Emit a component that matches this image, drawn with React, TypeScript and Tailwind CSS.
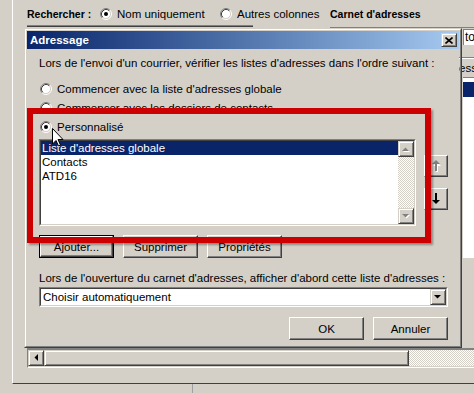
import React from 'react';

const Radio = ({ checked = false }: { checked?: boolean }) => (
  <svg width="12" height="12" viewBox="0 0 12 12" className="shrink-0">
    <circle cx="6" cy="6" r="4.5" fill="#ffffff" />
    <path d="M2.11 9.89A5.5 5.5 0 0 1 9.89 2.11" fill="none" stroke="#808080" />
    <path d="M9.89 2.11A5.5 5.5 0 0 1 2.11 9.89" fill="none" stroke="#ffffff" />
    <path d="M2.82 9.18A4.5 4.5 0 0 1 9.18 2.82" fill="none" stroke="#404040" />
    <path d="M9.18 2.82A4.5 4.5 0 0 1 2.82 9.18" fill="none" stroke="#d4d0c8" />
    {checked && <circle cx="6" cy="6" r="2" fill="#000000" />}
  </svg>
);

// classic raised face used for small scroll / arrow buttons
const raised =
  'bg-[#d4d0c8] border border-t-[#d4d0c8] border-l-[#d4d0c8] border-r-[#404040] border-b-[#404040] shadow-[inset_1px_1px_0_#ffffff,inset_-1px_-1px_0_#808080]';

const Button = ({ label, isDefault = false }: { label: string; isDefault?: boolean }) =>
  isDefault ? (
    <div className="w-[75px] h-[23px] border border-black flex">
      <div className="flex-1 flex items-center justify-center bg-[#d4d0c8] border border-t-white border-l-white border-r-[#404040] border-b-[#404040] shadow-[inset_-1px_-1px_0_#808080]">
        {label}
      </div>
    </div>
  ) : (
    <div className="w-[75px] h-[23px] flex items-center justify-center bg-[#d4d0c8] border border-t-white border-l-white border-r-[#404040] border-b-[#404040] shadow-[inset_-1px_-1px_0_#808080]">
      {label}
    </div>
  );

const Tri = ({ dir, color = '#000000', ghost = false }: { dir: 'up' | 'down' | 'left'; color?: string; ghost?: boolean }) => {
  const pts = { up: '0,4 3.5,0.5 7,4', down: '0,0 7,0 3.5,3.5', left: '4,0 4,7 0.5,3.5' }[dir];
  const w = dir === 'left' ? 4 : 7;
  const h = dir === 'left' ? 7 : 4;
  return (
    <svg width={w + 1} height={h + 1} viewBox={`0 0 ${w + 1} ${h + 1}`}>
      {ghost && <polygon points={pts} fill="#ffffff" transform="translate(1 1)" />}
      <polygon points={pts} fill={color} />
    </svg>
  );
};

const MoveArrow = ({ down = false }: { down?: boolean }) => (
  <svg width="9" height="12" viewBox="0 0 9 12">
    {down ? (
      <polygon points="3,0 5,0 5,7 8,7 4,11 0,7 3,7" fill="#000000" />
    ) : (
      <>
        <polygon points="4,1 8,5 5,5 5,12 3,12 3,5 0,5" fill="#ffffff" transform="translate(1 1)" />
        <polygon points="4,0 8,4 5,4 5,11 3,11 3,4 0,4" fill="#808080" />
      </>
    )}
  </svg>
);

export default function App() {
  return (
    <div className="relative w-[474px] h-[393px] overflow-hidden bg-[#d4d0c8] text-[11.5px] leading-[14px] text-black font-['Liberation_Sans',Arial,sans-serif]">
      {/* address book window behind the dialog */}
      <div className="ml-[12px] h-[384px] border-l border-l-white border-b border-b-[#404040] flex flex-col">
        <div className="h-[25px] pt-[7px] pl-[14px] flex items-start">
          <span className="w-[73px] font-bold text-[10.5px]">Rechercher :</span>
          <div className="mt-[1px]"><Radio checked /></div>
          <span className="ml-[5px] w-[103px]">Nom uniquement</span>
          <div className="mt-[1px]"><Radio /></div>
          <span className="ml-[5px] w-[93px]">Autres colonnes</span>
          <span className="font-bold text-[10.5px]">Carnet d'adresses</span>
        </div>
        <div className="h-[3px] flex items-start">
          <div className="ml-[14px] w-[226px] h-[2px] border-t border-t-[#808080] bg-[#404040]" />
          <div className="ml-[77px] mt-[2px] flex-1 h-px bg-[#808080]" />
        </div>

        <div className="h-[320px] flex">
          <div className="flex-1" />
          <div className="w-[11px] flex flex-col">
            <div className="h-px" />
            <div className="h-[16px] bg-white border-t border-l border-[#808080] pl-[1px] text-[12px] leading-[14px] overflow-hidden whitespace-nowrap">to</div>
            <div className="h-[12px]" />
            <div className="h-[20px] border-t border-t-[#808080] shadow-[inset_0_1px_0_#ffffff] overflow-hidden whitespace-nowrap pt-[3px] -ml-[4px]">esse</div>
            <div className="h-px bg-[#808080]" />
            <div className="h-[4px] bg-white" />
            <div className="h-[15px] bg-[#0a246a]" />
            <div className="h-[161px] bg-white" />
          </div>
        </div>

        {/* horizontal scrollbar */}
        <div className="ml-[14px] h-[20px] border-t-2 border-t-[#808080] border-l border-l-[#808080] border-b border-b-white flex">
          <div className={`w-[16px] h-[16px] flex items-center justify-center ${raised}`}>
            <Tri dir="left" />
          </div>
          <div className={`w-[365px] h-[16px] ${raised}`} />
          <div className="flex-1 h-[16px] bg-[image:repeating-conic-gradient(#d4d0c8_0_25%,#ffffff_0_50%)] bg-[length:2px_2px]" />
        </div>
      </div>
      <div className="ml-[192px] w-px h-[9px] bg-[#a0a0a0]" />

      {/* Adressage dialog */}
      <div className="absolute left-[24px] top-[28px] w-[438px] h-[320px] border border-t-[#d4d0c8] border-l-[#d4d0c8] border-r-[#404040] border-b-[#404040]">
        <div className="h-full border border-t-white border-l-white border-r-[#808080] border-b-[#808080] p-px flex flex-col">
          <div className="h-[18px] bg-linear-to-r from-[#0a246a] to-[#a6caf0] flex items-center justify-between pl-[3px] pr-[2px]">
            <span className="text-white font-bold">Adressage</span>
            <div className={`w-[16px] h-[14px] flex items-center justify-center ${raised}`}>
              <svg width="8" height="7" viewBox="0 0 8 7">
                <path d="M0.5 0.5L7.5 6.5M7.5 0.5L0.5 6.5" stroke="#000000" strokeWidth="1.6" />
              </svg>
            </div>
          </div>

          <div className="pl-[12px] pr-[11px] flex flex-col">
            <div className="mt-[7px] h-[14px] whitespace-nowrap">
              Lors de l'envoi d'un courrier, vérifier les listes d'adresses dans l'ordre suivant :
            </div>
            <div className="mt-[12px] h-[14px] flex items-center gap-[5px] pl-[1px]">
              <Radio />
              <span>Commencer avec la liste d'adresses globale</span>
            </div>
            <div className="mt-[5px] h-[14px] flex items-center gap-[5px] pl-[1px]">
              <Radio />
              <span>Commencer avec les dossiers de contacts</span>
            </div>
            <div className="mt-[5px] h-[14px] flex items-center gap-[5px] pl-[1px]">
              <Radio checked />
              <span>Personnalisé</span>
            </div>

            <div className="mt-[5px] flex">
              <div className="w-[377px] h-[87px] border border-t-[#808080] border-l-[#808080] border-r-white border-b-white">
                <div className="h-full border border-t-[#404040] border-l-[#404040] border-r-[#d4d0c8] border-b-[#d4d0c8] bg-white flex">
                  <div className="flex-1 flex flex-col">
                    <div className="h-[14px] bg-[#0a246a] text-white pl-px">Liste d'adresses globale</div>
                    <div className="h-[14px] pl-px">Contacts</div>
                    <div className="h-[14px] pl-px">ATD16</div>
                  </div>
                  <div className="w-[16px] flex flex-col">
                    <div className={`h-[16px] flex items-center justify-center ${raised}`}>
                      <Tri dir="up" color="#808080" ghost />
                    </div>
                    <div className="flex-1 bg-[image:repeating-conic-gradient(#d4d0c8_0_25%,#ffffff_0_50%)] bg-[length:2px_2px]" />
                    <div className={`h-[16px] flex items-center justify-center ${raised}`}>
                      <Tri dir="down" color="#808080" ghost />
                    </div>
                  </div>
                </div>
              </div>
              <div className="ml-[8px] pt-[16px] flex flex-col gap-[11px]">
                <div className="w-[24px] h-[22px] flex items-center justify-center bg-[#d4d0c8] border border-t-white border-l-white border-r-[#404040] border-b-[#404040] shadow-[inset_-1px_-1px_0_#808080]">
                  <MoveArrow />
                </div>
                <div className="w-[24px] h-[22px] flex items-center justify-center bg-[#d4d0c8] border border-t-white border-l-white border-r-[#404040] border-b-[#404040] shadow-[inset_-1px_-1px_0_#808080]">
                  <MoveArrow down />
                </div>
              </div>
            </div>

            <div className="mt-[9px] flex gap-[9px]">
              <Button label="Ajouter..." isDefault />
              <Button label="Supprimer" />
              <Button label="Propriétés" />
            </div>

            <div className="mt-[13px] h-[14px] whitespace-nowrap">
              Lors de l'ouverture du carnet d'adresses, afficher d'abord cette liste d'adresses :
            </div>
            <div className="mt-[2px] h-[20px] border border-t-[#808080] border-l-[#808080] border-r-white border-b-white">
              <div className="h-full border border-t-[#404040] border-l-[#404040] border-r-[#d4d0c8] border-b-[#d4d0c8] bg-white flex items-center">
                <span className="flex-1 pl-[2px]">Choisir automatiquement</span>
                <div className={`w-[16px] h-[16px] flex items-center justify-center ${raised}`}>
                  <Tri dir="down" />
                </div>
              </div>
            </div>

            <div className="mt-[10px] flex justify-end gap-[9px]">
              <Button label="OK" />
              <Button label="Annuler" />
            </div>
          </div>
        </div>
      </div>

      {/* red highlight drawn over the screenshot */}
      <div className="absolute left-[27px] top-[108px] w-[404px] h-[135px] border-[6px] border-[#cc0000] shadow-[2px_2px_2px_rgba(0,0,0,0.35)]" />

      {/* mouse pointer */}
      <svg className="absolute left-[52px] top-[128px]" width="12" height="19" viewBox="0 0 12 19">
        <path d="M0.5 0.5L0.5 16L4 12.5L6.5 18L8.5 17L6 11.5L11 11.5Z" fill="#ffffff" stroke="#000000" strokeLinejoin="miter" />
      </svg>
    </div>
  );
}
